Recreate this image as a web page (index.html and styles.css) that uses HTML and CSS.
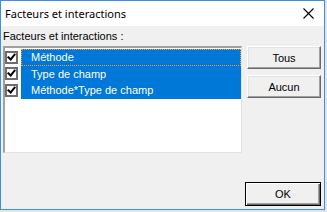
FILE: index.html
```html
<!DOCTYPE html>
<html lang="fr">
<head>
    <meta charset="UTF-8">
    <title>Facteurs et interactions</title>
    <link rel="stylesheet" href="styles.css">
</head>
<body>
<div class="dialog">
    <div class="titlebar">
        <span class="title">Facteurs et interactions</span>
        <svg class="close" width="11" height="11" viewBox="0 0 11 11">
            <path d="M0.5 0.5 L10.5 10.5 M10.5 0.5 L0.5 10.5" stroke="#000" stroke-width="1.1"/>
        </svg>
    </div>
    <div class="content">
        <div class="label">Facteurs et interactions :</div>
        <div class="main">
            <div class="listbox">
                <div class="item selected focused">
                    <span class="check"></span><span class="text">Méthode</span>
                </div>
                <div class="item selected">
                    <span class="check"></span><span class="text">Type de champ</span>
                </div>
                <div class="item selected">
                    <span class="check"></span><span class="text">Méthode*Type de champ</span>
                </div>
            </div>
            <div class="side">
                <button class="btn">Tous</button>
                <button class="btn">Aucun</button>
            </div>
        </div>
        <div class="footer">
            <button class="btn default">OK</button>
        </div>
    </div>
</div>
</body>
</html>
```

FILE: styles.css
```css
body {
    margin: 0;
    width: 327px;
    height: 212px;
    overflow: hidden;
    background: #e4e4e4;
    font-family: "Liberation Sans", Arial, sans-serif;
}

.dialog {
    width: 323px;
    height: 208px;
    border: 1px solid #3c8fe4;
    background: #f0f0f0;
    display: flex;
    flex-direction: column;
}

.titlebar {
    height: 25px;
    background: #ffffff;
    display: flex;
    align-items: center;
    justify-content: space-between;
    padding: 0 10px 0 4px;
}

.title {
    font-family: "Noto Sans", sans-serif;
    font-size: 11px;
    color: #000;
}

.content {
    flex: 1;
    display: flex;
    flex-direction: column;
    padding: 3px 2px 0 2px;
}

.label {
    font-size: 11px;
    height: 17px;
    line-height: 15px;
}

.main {
    display: flex;
    gap: 5px;
}

.listbox {
    width: 236px;
    height: 103px;
    background: #fff;
    border: 1px solid #e3e3e3;
    border-top: 2px solid #a0a0a0;
    border-left: 2px solid #a0a0a0;
    padding-top: 1px;
}

.item {
    display: flex;
    align-items: center;
    height: 16.5px;
    font-size: 11px;
}

.check {
    width: 9px;
    height: 9px;
    border: 2px solid #6d6d6d;
    background: #fff;
    margin: 0 3px 0 0;
    position: relative;
    flex: none;
}

.check::after {
    content: "";
    position: absolute;
    left: 2px;
    top: -1px;
    width: 3px;
    height: 6px;
    border-right: 2px solid #000;
    border-bottom: 2px solid #000;
    transform: rotate(40deg);
}

.text {
    flex: 1;
    height: 100%;
    display: flex;
    align-items: center;
    padding-left: 10px;
}

.selected .text {
    background: #0078d7;
    color: #fff;
}

.focused .text {
    outline: 1px dotted #f0a030;
    outline-offset: -1px;
}

.side {
    display: flex;
    flex-direction: column;
    gap: 6px;
}

.btn {
    width: 74px;
    height: 23px;
    font-family: "Liberation Sans", Arial, sans-serif;
    font-size: 11px;
    background: #f0f0f0;
    border: 1px solid;
    border-color: #fff #696969 #696969 #fff;
    box-shadow: inset -1px -1px 0 #a0a0a0, inset 1px 1px 0 #e3e3e3;
    padding: 0;
    color: #000;
}

.footer {
    margin-top: auto;
    display: flex;
    justify-content: flex-end;
    padding: 0 1px 3px 0;
}

.btn.default {
    width: 76px;
    height: 24px;
    border: 1px solid #000;
    box-shadow: inset 1px 1px 0 #fff, inset -1px -1px 0 #696969, inset -2px -2px 0 #a0a0a0;
}
```
